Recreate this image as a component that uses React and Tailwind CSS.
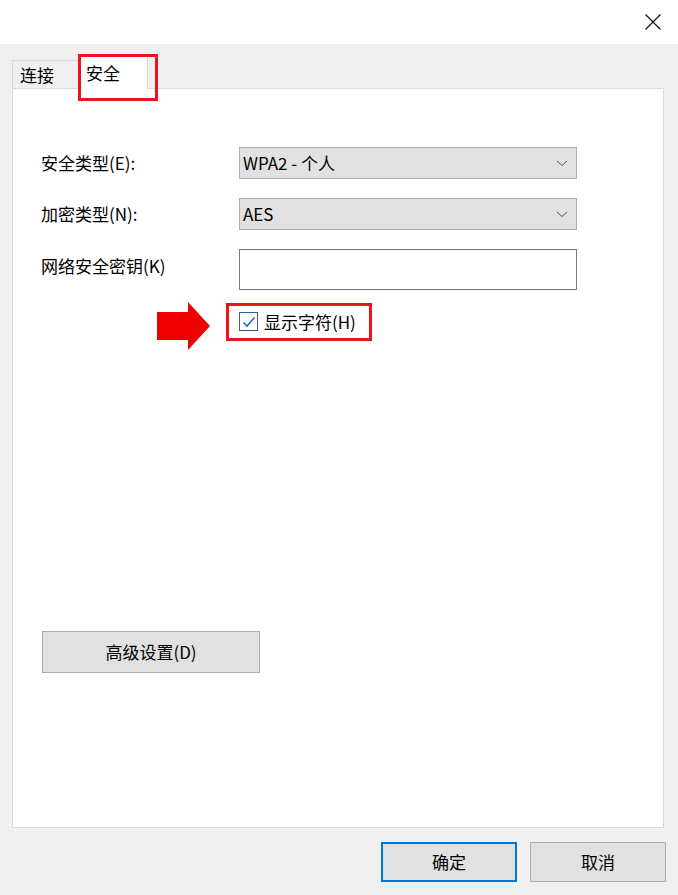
import React from 'react';

const font = { fontFamily: '"Noto Sans CJK SC", "Noto Sans", sans-serif' };

const Chevron = () => (
  <svg width="12" height="7" viewBox="0 0 12 7" className="shrink-0">
    <path d="M1 1 L6 5.5 L11 1" fill="none" stroke="#555" strokeWidth="1" />
  </svg>
);

const Select = ({ value }) => (
  <div className="w-[338px] h-[32px] bg-[#e1e1e1] border border-[#adadad] flex items-center justify-between pl-[3px] pr-[8px] text-[17px] text-black">
    <span>{value}</span>
    <Chevron />
  </div>
);

const Button = ({ children, className = '' }) => (
  <div className={`bg-[#e1e1e1] flex items-center justify-center text-[17px] text-black ${className}`}>
    {children}
  </div>
);

const App = () => {
  return (
    <div className="w-[678px] h-[895px] flex flex-col bg-[#f0f0f0] overflow-hidden" style={font}>
      {/* 标题栏 */}
      <div className="h-[44px] bg-white flex items-center justify-end pr-[16px] shrink-0">
        <svg width="18" height="18" viewBox="0 0 18 18">
          <path d="M1.5 1.5 L16.5 16.5 M16.5 1.5 L1.5 16.5" stroke="#111" strokeWidth="1.2" />
        </svg>
      </div>

      {/* 主体 */}
      <div className="flex-1 flex flex-col pl-[12px] pr-[14px]">
        {/* 选项卡 */}
        <div className="flex items-end mt-[11px] h-[33px]">
          <div className="h-[28px] w-[66px] border-t border-l border-[#d9d9d9] bg-[#f0f0f0] flex items-center pl-[7px] text-[17px] text-black">
            连接
          </div>
          <div className="relative h-[33px] w-[70px] bg-white border-t border-l border-r border-[#d9d9d9] flex items-center pl-[7px] text-[17px] text-black z-10 -mb-px">
            安全
            <div className="absolute left-[-1px] top-[-3px] w-[80px] h-[47px] border-[3px] border-[#e8161b]" />
          </div>
        </div>

        {/* 面板 */}
        <div className="h-[740px] bg-white border border-[#d9d9d9] flex flex-col pl-[28px]">
          <div className="flex items-center mt-[58px]">
            <div className="w-[198px] text-[17px] text-black">安全类型(E):</div>
            <Select value="WPA2 - 个人" />
          </div>
          <div className="flex items-center mt-[19px]">
            <div className="w-[198px] text-[17px] text-black">加密类型(N):</div>
            <Select value="AES" />
          </div>
          <div className="flex items-start mt-[19px]">
            <div className="w-[198px] text-[17px] text-black pt-[4px]">网络安全密钥(K)</div>
            <div className="w-[338px] h-[41px] bg-white border border-[#7a7a7a]" />
          </div>

          <div className="flex items-center mt-[12px] ml-[116px]">
            <svg width="53" height="48" viewBox="0 0 53 48">
              <polygon points="0,10 31,10 31,0 53,24 31,48 31,38 0,38" fill="#ee0000" />
            </svg>
            <div className="ml-[16px] h-[38px] w-[146px] border-[3px] border-[#e8161b] flex items-center pl-[10px] -mt-[9px]">
              <div className="w-[19px] h-[19px] border border-[#3a5f86] bg-white flex items-center justify-center">
                <svg width="14" height="12" viewBox="0 0 14 12">
                  <path d="M1.5 6.5 L5 10 L12.5 1.5" fill="none" stroke="#1f6fb8" strokeWidth="1.6" />
                </svg>
              </div>
              <span className="ml-[6px] text-[17px] text-black">显示字符(H)</span>
            </div>
          </div>

          <Button className="mt-[281px] ml-[1px] w-[218px] h-[42px] border border-[#adadad]">
            高级设置(D)
          </Button>
        </div>

        {/* 底部按钮 */}
        <div className="flex justify-end gap-[13px] mt-[14px] -mr-[2px]">
          <Button className="w-[136px] h-[40px] border-2 border-[#0078d7]">确定</Button>
          <Button className="w-[136px] h-[40px] border border-[#adadad]">取消</Button>
        </div>
      </div>
    </div>
  );
};

export default App;
